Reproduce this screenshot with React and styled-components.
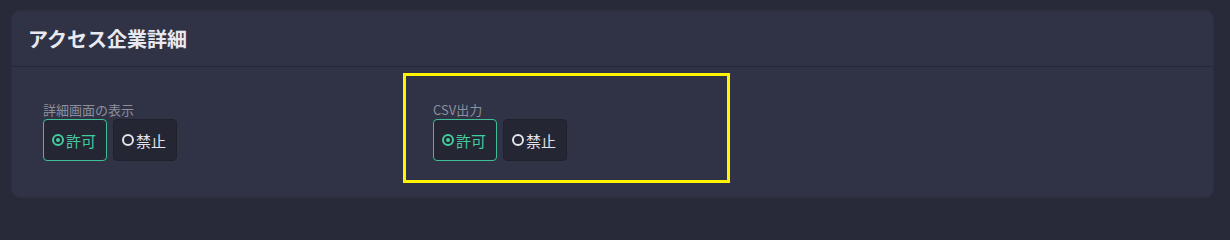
import React, { useState } from 'react';
import styled, { createGlobalStyle } from 'styled-components';

const GlobalStyle = createGlobalStyle`
  body {
    margin: 0;
    background: #282a3a;
    font-family: "Noto Sans CJK JP", "Noto Sans", sans-serif;
  }
`;

const Page = styled.div`
  padding: 10px 16px 14px 11px;
`;

const Card = styled.section`
  background: #303346;
  border: 1px solid #2c2f40;
  border-radius: 9px;
`;

const Header = styled.div`
  height: 55px;
  display: flex;
  align-items: center;
  padding-left: 16px;
  border-bottom: 1px solid #24263a;
`;

const Title = styled.h2`
  margin: 0;
  font-size: 20px;
  font-weight: 700;
  color: #e8e9f0;
  line-height: 1;
`;

const Body = styled.div`
  padding: 6px 0 14px 1px;
`;

const Fields = styled.div`
  display: grid;
  grid-template-columns: repeat(2, 327px);
  column-gap: 63px;
`;

const Field = styled.div`
  border: 3px solid ${(p) => (p.$highlight ? '#fff500' : 'transparent')};
  padding: 24px 27px 19px;
`;

const Label = styled.div`
  font-size: 13px;
  line-height: 19px;
  color: #8d8f9e;
`;

const Options = styled.div`
  display: flex;
  gap: 6px;
`;

const Option = styled.button`
  height: 42px;
  display: flex;
  align-items: center;
  gap: 2px;
  padding: 0 10px 0 8px;
  border-radius: 4px;
  border: 1px solid ${(p) => (p.$checked ? '#3fbf95' : '#1f212c')};
  background: #242633;
  color: ${(p) => (p.$checked ? '#45cc9c' : '#e4e5ec')};
  font-family: inherit;
  font-size: 15px;
  font-weight: 400;
  cursor: pointer;
`;

const Dot = styled.span`
  width: 12px;
  height: 12px;
  box-sizing: border-box;
  border-radius: 50%;
  border: 2.5px solid currentColor;
  display: flex;
  align-items: center;
  justify-content: center;

  &::after {
    content: "";
    width: 4px;
    height: 4px;
    border-radius: 50%;
    background: currentColor;
    display: ${(p) => (p.$checked ? 'block' : 'none')};
  }
`;

function Choice({ label, highlight }) {
  const [value, setValue] = useState('allow');
  const items = [
    { key: 'allow', text: '許可' },
    { key: 'deny', text: '禁止' },
  ];
  return (
    <Field $highlight={highlight}>
      <Label>{label}</Label>
      <Options>
        {items.map((it) => (
          <Option key={it.key} $checked={value === it.key} onClick={() => setValue(it.key)}>
            <Dot $checked={value === it.key} />
            {it.text}
          </Option>
        ))}
      </Options>
    </Field>
  );
}

export default function App() {
  return (
    <>
      <GlobalStyle />
      <Page>
        <Card>
          <Header>
            <Title>アクセス企業詳細</Title>
          </Header>
          <Body>
            <Fields>
              <Choice label="詳細画面の表示" />
              <Choice label="CSV出力" highlight />
            </Fields>
          </Body>
        </Card>
      </Page>
    </>
  );
}
